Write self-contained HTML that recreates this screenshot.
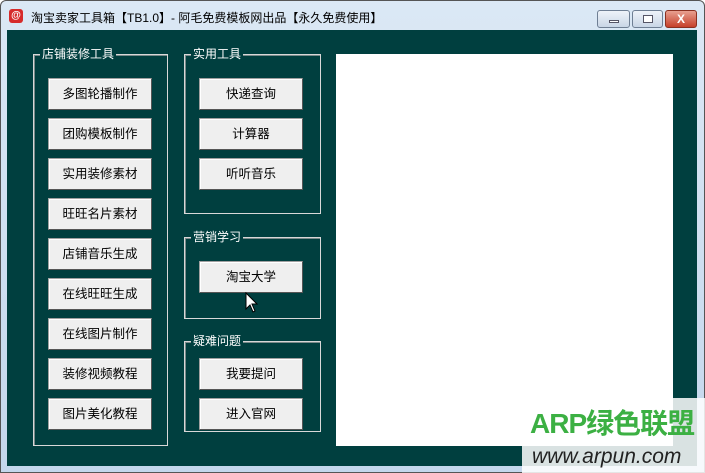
<!DOCTYPE html><html><head><meta charset="utf-8"><style>
*{margin:0;padding:0;box-sizing:border-box}
body{width:705px;height:473px;overflow:hidden;background:#fff;font-family:"Liberation Sans","Noto Sans CJK SC",sans-serif;position:relative}
.win{position:absolute;left:0;top:0;width:705px;height:473px;background:linear-gradient(#dbe8f5,#c4d7ec);border:1px solid #555;border-radius:6px 6px 0 0}
.title{position:absolute;left:31px;top:9px;font-size:12px;color:#000;white-space:nowrap}
.ico{position:absolute;left:9px;top:9px;width:14px;height:14px;background:#d62b2b;border-radius:3px;color:#fff;font-size:10px;line-height:14px;text-align:center;font-weight:bold}
.cl{position:absolute;left:7px;top:30px;width:690px;height:436px;background:#003f3f}
.tb{position:absolute;top:10px;height:18px;border:1px solid #6f7f94;border-radius:3px;background:linear-gradient(#eef3f9,#c9d6e6)}
.g{position:absolute;border:1px solid #d8d8d8;box-shadow:inset 1px 1px 0 #7a8a8a}
.g span{position:absolute;left:6px;top:-9px;background:#003f3f;color:#fff;font-size:12px;padding:0 2px;line-height:16px}
.b{position:absolute;width:104px;height:32px;background:#efefef;border:1px solid #a0a0a0;border-right-color:#555;border-bottom-color:#555;box-shadow:inset 1px 1px 0 #fff;font-size:12.5px;text-align:center;line-height:30px;color:#000}
.white{position:absolute;left:336px;top:54px;width:337px;height:392px;background:#fff}
.wm{position:absolute;left:522px;top:398px;width:183px;height:75px;background:rgba(255,255,255,.85)}
</style></head><body>
<div class="win"></div>
<div class="ico">@</div>
<div class="title">淘宝卖家工具箱【TB1.0】- 阿毛免费模板网出品【永久免费使用】</div>
<div class="tb" style="left:597px;width:33px"><div style="position:absolute;left:11px;top:9px;width:10px;height:3px;background:#fff;border:1px solid #556"></div></div>
<div class="tb" style="left:632px;width:31px"><div style="position:absolute;left:10px;top:4px;width:10px;height:8px;background:#fff;border:1px solid #556"></div></div>
<div class="tb" style="left:665px;width:32px;background:linear-gradient(#e8a090,#c6402a);border-color:#8a3020;color:#fff;font-weight:bold;font-size:12px;text-align:center;line-height:16px">X</div>
<div class="cl"></div>
<div class="white"></div>
<div class="g" style="left:33px;top:54px;width:135px;height:392px"><span>店铺装修工具</span></div>
<div class="g" style="left:184px;top:54px;width:137px;height:160px"><span>实用工具</span></div>
<div class="g" style="left:184px;top:237px;width:137px;height:82px"><span>营销学习</span></div>
<div class="g" style="left:184px;top:341px;width:137px;height:91px"><span>疑难问题</span></div>
<div class="b" style="left:48px;top:78px">多图轮播制作</div>
<div class="b" style="left:48px;top:118px">团购模板制作</div>
<div class="b" style="left:48px;top:158px">实用装修素材</div>
<div class="b" style="left:48px;top:198px">旺旺名片素材</div>
<div class="b" style="left:48px;top:238px">店铺音乐生成</div>
<div class="b" style="left:48px;top:278px">在线旺旺生成</div>
<div class="b" style="left:48px;top:318px">在线图片制作</div>
<div class="b" style="left:48px;top:358px">装修视频教程</div>
<div class="b" style="left:48px;top:398px">图片美化教程</div>
<div class="b" style="left:199px;top:78px">快递查询</div>
<div class="b" style="left:199px;top:118px">计算器</div>
<div class="b" style="left:199px;top:158px">听听音乐</div>
<div class="b" style="left:199px;top:261px">淘宝大学</div>
<div class="b" style="left:199px;top:358px">我要提问</div>
<div class="b" style="left:199px;top:398px">进入官网</div>
<svg style="position:absolute;left:245px;top:292px" width="14" height="22"><path d="M1 1 L1 17 L5 13 L8 20 L10 19 L7 12 L12 12 Z" fill="#fff" stroke="#000" stroke-width="1"/></svg>
<div class="wm"></div>
<div style="position:absolute;left:530px;top:407px;font-size:28px;font-weight:bold;color:#3cb043;line-height:34px;white-space:nowrap;letter-spacing:-1px">ARP绿色联盟</div>
<div style="position:absolute;left:532px;top:444px;font-size:21px;font-style:italic;color:#222;line-height:26px;white-space:nowrap">www.arpun.com</div>
</body></html>
